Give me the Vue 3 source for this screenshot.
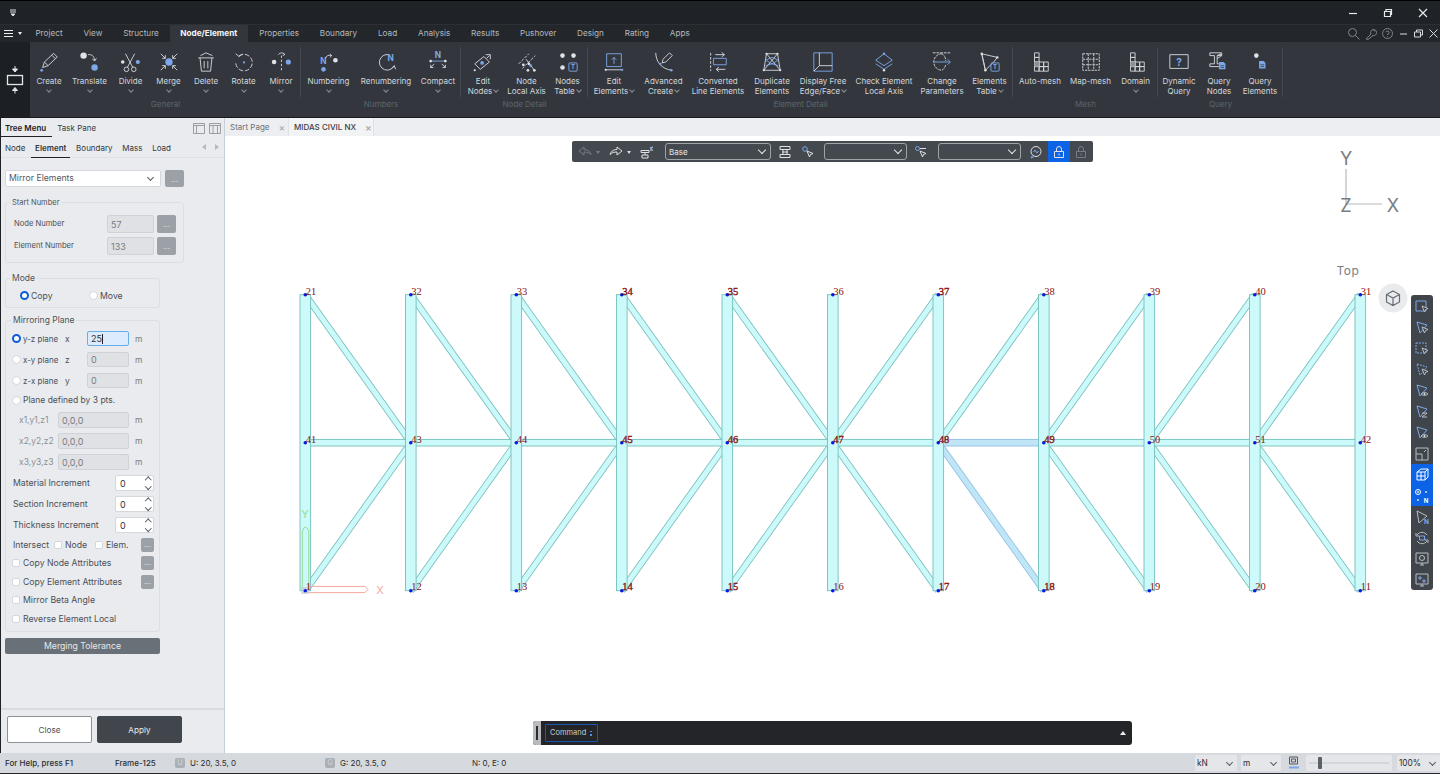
<template>
  <div class="app">
    <div class="titlebar">
      <svg class="qat" width="8" height="8" viewBox="0 0 8 8"><path d="M1 1h6M1 3h6M2 5h4L4 7z" stroke="#d8dbdf" fill="#d8dbdf" stroke-width="1" /></svg>
      <div class="win-btns">
        <svg width="12" height="12" viewBox="0 0 12 12"><path d="M2 6.5h8" /></svg>
        <svg width="12" height="12" viewBox="0 0 12 12"><path d="M2.5 4.5h6v5h-6zM4 4.5V2.5h5.5v5H8.5" /></svg>
        <svg width="12" height="12" viewBox="0 0 12 12"><path d="M2 2l8 8M10 2l-8 8" /></svg>
      </div>
    </div>

    <div class="tabbar">
      <div class="hamburger"><span></span><span></span><span></span><i></i></div>
      <span v-for="t in menuTabs" :key="t" class="menu-tab" :class="{ on: t === 'Node/Element' }">{{ t }}</span>
      <div class="tab-tools">
        <svg width="13" height="13" viewBox="0 0 13 13"><circle cx="5.5" cy="5.5" r="4" /><path d="M8.5 8.5l4 4" /></svg>
        <svg width="13" height="13" viewBox="0 0 13 13"><path d="M2 12l5-5a3 3 0 1 1 2 1.5L4 12.5zM9 2.5l2 2" /></svg>
        <svg width="13" height="13" viewBox="0 0 13 13"><circle cx="6.5" cy="6.5" r="5" /><path d="M5 5.2a1.6 1.6 0 1 1 1.5 2v.8M6.5 9.4v.6" /></svg>
        <svg width="11" height="13" viewBox="0 0 11 13"><path d="M2 7h7" /></svg>
        <svg width="11" height="13" viewBox="0 0 11 13"><path d="M1.5 5h6v5h-6zM3.5 5V3h6v5H7.5" /></svg>
        <svg width="11" height="13" viewBox="0 0 11 13"><path d="M1.5 2.5l8 8M9.5 2.5l-8 8" /></svg>
      </div>
    </div>

    <div class="ribbon">
      <div class="view-block">
        <svg width="20" height="28" viewBox="0 0 20 28">
          <path d="M10 0v3M7.5 3h5L10 6z" fill="#e4e7ea" stroke="#e4e7ea" />
          <rect x="2.5" y="9.5" width="15" height="9" fill="none" stroke="#e4e7ea" stroke-width="1.3" />
          <path d="M10 27.5v-3M7.5 24.5h5L10 21.5z" fill="#e4e7ea" stroke="#e4e7ea" />
        </svg>
      </div>
      <div v-for="g in groups" :key="g.name" class="rb-group">
        <div class="rb-items">
          <div v-for="it in g.items" :key="it.lines.join()" class="rb-item" :style="{ width: it.w + 'px' }">
            <svg class="rb-ico" width="22" height="22" viewBox="0 0 24 24" v-html="icons[it.icon]"></svg>
            <div v-for="(l, n) in it.lines" :key="l" class="rb-line">
              {{ l }}<i v-if="it.inline && n === 1" class="chev small inl"></i>
            </div>
            <i v-if="it.below" class="chev small below"></i>
          </div>
        </div>
        <div class="rb-name">{{ g.name }}</div>
      </div>
    </div>

    <div class="workspace">
      <aside class="panel">
        <div class="pane-tabs">
          <span class="pane-tab on">Tree Menu</span>
          <span class="pane-tab">Task Pane</span>
          <div class="pane-icons">
            <svg width="12" height="12" viewBox="0 0 12 12"><path d="M.5 1.5h11v10H.5zM.5 3.5h11M3.5 3.5v8" /></svg>
            <svg width="12" height="12" viewBox="0 0 12 12"><path d="M.5 1.5h11v10H.5zM.5 3.5h11M8.5 3.5v8M4 3.5v8" /></svg>
          </div>
        </div>
        <div class="sub-tabs">
          <span v-for="t in subTabs" :key="t" class="sub-tab" :class="{ on: t === 'Element' }">{{ t }}</span>
          <div class="sub-arrows"><i></i><i class="next"></i></div>
        </div>

        <div class="panel-body">
          <div class="func-row">
            <div class="func-select">Mirror Elements<i class="chev"></i></div>
            <div class="dots big">...</div>
          </div>

          <fieldset class="box start-box">
            <legend>Start Number</legend>
            <div class="num-row">
              <span class="num-label">Node Number</span>
              <div class="inp off num-inp">57</div>
              <div class="dots big">...</div>
            </div>
            <div class="num-row">
              <span class="num-label">Element Number</span>
              <div class="inp off num-inp">133</div>
              <div class="dots big">...</div>
            </div>
          </fieldset>

          <fieldset class="box mode-box">
            <legend>Mode</legend>
            <div class="mode-row">
              <span class="mode-opt"><i class="radio on"></i>Copy</span>
              <span class="mode-opt"><i class="radio"></i>Move</span>
            </div>
          </fieldset>

          <fieldset class="box plane-box">
            <legend>Mirroring Plane</legend>
            <div v-for="p in planes" :key="p.name" class="row">
              <i class="radio" :class="{ on: p.on }"></i>
              <span class="plane-name">{{ p.name }}</span>
              <span class="plane-axis">{{ p.axis }}</span>
              <div class="inp plane-inp" :class="p.on ? 'focus' : 'off'">{{ p.val }}<b v-if="p.on" class="caret"></b></div>
              <span class="unit">m</span>
            </div>
            <div class="row short">
              <i class="radio"></i><span class="plane-def">Plane defined by 3 pts.</span>
            </div>
            <div v-for="c in coords" :key="c" class="row">
              <span class="coord-name">{{ c }}</span>
              <div class="inp off coord-inp">0,0,0</div>
              <span class="unit">m</span>
            </div>
            <div v-for="s in increments" :key="s" class="row">
              <span class="inc-name">{{ s }}</span>
              <div class="spin">0<span class="spin-arrows"><i class="chev up"></i><i class="chev"></i></span></div>
            </div>
            <div class="row check">
              <span class="isect">Intersect</span>
              <i class="box-check"></i><span class="isect-node">Node</span>
              <i class="box-check"></i><span>Elem.</span>
              <div class="dots">...</div>
            </div>
            <div class="row check"><i class="box-check"></i><span>Copy Node Attributes</span><div class="dots">...</div></div>
            <div class="row check"><i class="box-check"></i><span>Copy Element Attributes</span><div class="dots">...</div></div>
            <div class="row check"><i class="box-check"></i><span>Mirror Beta Angle</span></div>
            <div class="row check"><i class="box-check"></i><span>Reverse Element Local</span></div>
          </fieldset>

          <div class="merge-btn">Merging Tolerance</div>
        </div>

        <div class="panel-foot">
          <button class="foot-btn">Close</button>
          <button class="foot-btn dark">Apply</button>
        </div>
      </aside>

      <main class="main">
        <div class="doc-tabs">
          <span class="doc-tab">Start Page<em>×</em></span>
          <span class="doc-tab on">MIDAS CIVIL NX<em>×</em></span>
        </div>
        <div class="canvas">
          <svg class="model" viewBox="225 136 1215 617" width="1215" height="617">
            <!-- diagonals go under the columns -->
            <g v-for="(d, i) in diagonals" :key="'d' + i">
              <line :x1="d.x1" :y1="d.y1" :x2="d.x2" :y2="d.y2" :stroke="d.sel ? '#8dbfe2' : '#74bfbb'" stroke-width="6.8" />
              <line :x1="d.x1" :y1="d.y1" :x2="d.x2" :y2="d.y2" :stroke="d.sel ? '#bfe5f6' : '#ccf9f9'" stroke-width="5.2" />
            </g>
            <g v-for="(x, i) in columns.slice(0, 10)" :key="'h' + i">
              <rect :x="x" y="439.4" width="105.5" height="6.6" :fill="i === 6 ? '#bfe5f6' : '#ccf9f9'" :stroke="i === 6 ? '#8dbfe2' : '#74bfbb'" stroke-width="0.9" />
            </g>
            <rect v-for="x in columns" :key="'c' + x" :x="x - 5.3" :y="topY" width="10.6" :height="botY - topY" fill="#ccf9f9" stroke="#74bfbb" stroke-width="0.9" />

            <!-- global axes at the origin -->
            <path d="M302.3 590V531q3-8 6.5 0v59" fill="none" stroke="#97dc97" />
            <path d="M308 586.4h57l3 3-3 3.2h-57" fill="none" stroke="#f6a8a2" />
            <rect x="301" y="587" width="8" height="7" rx="1.5" fill="#c9d0d4" opacity="0.8" />
            <text x="305" y="518" class="axis-lab" fill="#97dc97" text-anchor="middle">Y</text>
            <text x="380" y="594" class="axis-lab" fill="#f6a8a2" text-anchor="middle">X</text>

            <g v-for="n in nodes" :key="n.t + n.x">
              <circle :cx="n.x" :cy="n.y" r="1.8" fill="#0a18e8" />
              <text :x="n.x + 0.5" :y="n.by" class="node-lab" :class="{ dup: n.dup }">{{ n.t }}</text>
            </g>

            <!-- view triad -->
            <path d="M1346 169v36M1346 204h36" stroke="#b4b9be" stroke-width="1.2" fill="none" />
            <text x="1346" y="165" class="triad" text-anchor="middle">Y</text>
            <text x="1346" y="212" class="triad" text-anchor="middle">Z</text>
            <text x="1393" y="212" class="triad" text-anchor="middle">X</text>
            <text x="1348" y="275" class="view-name" text-anchor="middle">Top</text>
            <circle cx="1393" cy="298" r="14.5" fill="#e9ebed" />
            <path d="M1393 291l6.5 3.5v7.5l-6.5 3.5-6.5-3.5v-7.5zM1386.5 294.5l6.5 3.5 6.5-3.5M1393 298v7.5" fill="none" stroke="#666c73" stroke-width="1.2" />
          </svg>

          <div class="float-bar">
            <svg class="fb-ico dim first" width="14" height="14" viewBox="0 0 14 14"><path d="M1 6l5-4v2.5c4 0 6 2 7 5-2-2-4-2.5-7-2.5V10z" /></svg>
            <i class="tri dim"></i>
            <svg class="fb-ico" width="14" height="14" viewBox="0 0 14 14"><path d="M13 6L8 2v2.5c-4 0-6 2-7 5 2-2 4-2.5 7-2.5V10z" /></svg>
            <i class="tri"></i>
            <svg class="fb-ico" width="14" height="14" viewBox="0 0 14 14"><path d="M1 5.5h8v2H1zM2 10h6v3H2zM5 7.5V10M10 3l3-1M10 5h3" /><circle cx="11" cy="3" r="1.2" fill="#7da7e8" stroke="none" /></svg>
            <div class="fb-select base">Base<i class="chev light"></i></div>
            <svg class="fb-ico" width="14" height="14" viewBox="0 0 14 14"><path d="M2 1.5h10v3H2zM2 9.5h10v3H2zM5 4.5v5M9 4.5v5M4 7h6" /></svg>
            <svg class="fb-ico pick" width="14" height="14" viewBox="0 0 14 14"><circle cx="4" cy="4" r="2.3" stroke="#7da7e8" /><path d="M6 6l6 2.5-2.5 1-1 2.5z" /></svg>
            <div class="fb-select mid">&nbsp;<i class="chev light"></i></div>
            <svg class="fb-ico" width="14" height="14" viewBox="0 0 14 14"><circle cx="3.5" cy="3.5" r="2" stroke="#7da7e8" /><path d="M6 3.5h6M6 6l6 2.5-2.5 1-1 2.5z" /></svg>
            <div class="fb-select last">&nbsp;<i class="chev light"></i></div>
            <svg class="fb-ico" width="14" height="14" viewBox="0 0 14 14"><circle cx="7" cy="6.5" r="5" /><path d="M3.5 10.5L2 13l3-1.3M4.5 7l1.5-2 2 3 1.5-2" stroke="#7da7e8" /></svg>
            <div class="lock-on">
              <svg class="fb-ico" width="14" height="14" viewBox="0 0 14 14"><path d="M2.5 6.5h9v6h-9zM4.5 6.5V4a2.5 2.5 0 0 1 5 0v2.5M7 8.5v2" /></svg>
            </div>
            <svg class="fb-ico dim" width="14" height="14" viewBox="0 0 14 14"><path d="M2.5 6.5h9v6h-9zM4.5 6.5V4a2.5 2.5 0 0 1 5 0v2.5M7 8.5v2" /></svg>
          </div>

          <div class="side-bar">
            <div v-for="(b, i) in sideIcons" :key="i" class="side-btn" :class="{ on: b.on }">
              <svg width="16" height="16" viewBox="0 0 16 16" v-html="b.svg"></svg>
            </div>
          </div>

          <div class="cmd-bar">
            <div class="cmd-grip"><i></i></div>
            <div class="cmd-box">Command<span class="cmd-dots"><i></i><i></i></span></div>
            <i class="cmd-tri"></i>
          </div>
        </div>
      </main>
    </div>

    <footer class="status">
      <span class="st-help">For Help, press F1</span>
      <span class="st-frame">Frame-125</span>
      <i class="st-badge">U</i>
      <span class="st-u">U: 20, 3.5, 0</span>
      <i class="st-badge">G</i>
      <span class="st-g">G: 20, 3.5, 0</span>
      <span class="st-ne">N: 0, E: 0</span>
      <div class="st-select unit-f">kN<i class="chev"></i></div>
      <div class="st-select unit-l">m<i class="chev"></i></div>
      <svg class="st-ico" width="12" height="16" viewBox="0 0 12 16"><path d="M1.5 2h8v7h-8zM3.5 4h4v3h-4z" fill="none" stroke="#555b62" /><path d="M1 12.5h10" stroke="#7da7e8" stroke-width="2" /></svg>
      <div class="st-slider"><i class="track"></i><i class="thumb"></i></div>
      <div class="st-select zoom">100%<i class="chev"></i></div>
    </footer>
  </div>
</template>

<script setup>
const BLUE = '#7da7e8'
const dot = (x, y, r = 2.5, c = BLUE) => `<circle cx="${x}" cy="${y}" r="${r}" fill="${c}" stroke="none"/>`
const wdot = (x, y, r = 2.5) => dot(x, y, r, '#dfe2e6')
const blue = (d, extra = '') => `<path d="${d}" stroke="${BLUE}" ${extra}/>`
const path = (d, extra = '') => `<path d="${d}" ${extra}/>`
const letter = (t, x, y, s = 9) => `<text x="${x}" y="${y}" font-size="${s}" font-weight="700" font-family="Inter, sans-serif" fill="${BLUE}" stroke="none" text-anchor="middle">${t}</text>`
const tBox = (x, y) => `<rect x="${x}" y="${y}" width="9" height="9" rx="1" stroke="${BLUE}"/>` + letter('T', x + 4.5, y + 7, 6.5)
const docBadge = (x, y) => `<path d="M${x} ${y}h5l2 2v6h-7z" fill="${BLUE}" stroke="none"/><path d="M${x + 1.5} ${y + 4}h4M${x + 1.5} ${y + 6}h4" stroke="#33373d" stroke-width=".8"/>`

const gridL = (
  path('M6 2h5v5h-5zM6 7h5v5h-5zM6 12h5v5h-5zM6 17h5v5h-5zM11 12h5v5h-5zM16 12h5v5h-5zM11 17h5v5h-5zM16 17h5v5h-5z') +
  path('M6 12h5v5h-5z', 'fill="#8b9096" stroke="none"')
)

const icons = {
  create: path('M5 18L7 12 17 2.5l4 4L11 16zM15 4.5l4 4M7 12l4 4') + dot(4, 21, 1.5),
  translate: wdot(5, 5, 3.5) + dot(17, 18, 3.5) + path('M10 4c4-.5 6.5 1.5 7 6M14.5 8.5l2.5 2.5 2-3'),
  divide: `<circle cx="7" cy="20" r="2.5"/><circle cx="15" cy="20" r="2.5"/>` + path('M8 18L16 3M14 18L6 3') + wdot(3, 12, 2) + dot(19.5, 12, 2.3),
  merge: dot(12, 12, 4) + path('M3 3l5 5M8 4.5V8H4.5M21 3l-5 5M16 4.5V8h3.5M3 21l5-5M8 19.5V16H4.5M21 21l-5-5M16 19.5V16h3.5'),
  delete: path('M3.5 7.5h17M5.5 7.5L7 22h10l1.5-14.5M10 11v8M14 11v8M6 5l6-3 7 3'),
  rotate: path('M6.5 5.5a9 9 0 1 1-3.5 7', 'stroke-dasharray="5 2"') + path('M3 3l3.5 3L10 3.5') + dot(12, 12.5, 1.2),
  mirror: wdot(4.5, 12, 2.5) + dot(20, 12, 2.8) + path('M12.5 5v17', 'stroke-dasharray="2.5 2"') + path('M9 4c2-2.5 5-2.5 7 0M14.5 2l1.5 2-2 1'),
  numbering: letter('N', 6, 14) + dot(6, 20, 2.5) + wdot(19, 10, 2.5) + path('M8 8c1-3 4-4 7-3M13 3l2 2-2 2'),
  renumbering: path('M15 4a8.5 8.5 0 1 0 6 12M18 19l3-3 1.5 4') + letter('N', 17, 11),
  compact: letter('N', 12, 8) + blue('M5 11h14') + wdot(4, 11, 1.5) + wdot(20, 11, 1.5) + path('M8 14l-4 4M4 15v3h3M16 14l4 4M20 15v3h-3'),
  editNodes: path('M3 14L13 6l6 6-10 8zM19 5l-3 3M15 4h5v5') + dot(11, 13, 2) + wdot(3, 21, 1.2),
  nodeLocal: path('M3 14L14 3M7 19L21 5', 'stroke-dasharray="3 1.5"') + path('M11 9l9 12') + wdot(8, 15, 1.5) + wdot(14, 14, 1.5) + dot(16, 16, 1.5) + wdot(20, 21, 1.5) + wdot(13, 21, 1.5),
  nodesTable: wdot(6, 5, 2.5) + wdot(18, 5, 2.5) + wdot(6, 18, 2.5) + tBox(13, 13),
  editElements: blue('M4 3h16v14H4zM12 14V7M9.5 9.5L12 7l2.5 2.5') + path('M3 20.5h18') + wdot(3, 20.5, 1.2) + dot(21, 20.5, 1.2),
  advanced: path('M3 2c0 9 6 18 18 19') + dot(8, 14, 1.3) + dot(20, 21, 1.3) + path('M10 13l1-4 7-7 3 3-7 7z'),
  converted: path('M4 2v20', 'stroke-dasharray="3 1.5"') + blue('M7 8h14v7H7z') + path('M9 4h10M16 1.5L19 4l-3 2.5M20 20H10M13 17.5L10 20l3 2.5'),
  duplicate: path('M6 3L3 21h18L18 3zM6 3l15 18M18 3L3 21') + blue('M5 10l7-3 7 3-7 4zM5 16l7-2 7 2') + wdot(6, 3, 1.2) + wdot(18, 3, 1.2) + wdot(3, 21, 1.2) + wdot(21, 21, 1.2),
  freeEdge: blue('M2 2h20v20H2z') + path('M8 2v14h14M8 16l-6 6'),
  check: blue('M12 3l9 7-9 6-9-6zM3 14l9 6 9-6') + dot(12, 3, 1.3) + wdot(12, 21, 1.3),
  change: path('M12 3a9 9 0 0 0 0 18M12 3a9 9 0 0 1 4 8M12 21a9 9 0 0 0 4-6M2 2h20', 'stroke-dasharray="3 1"') + blue('M3 12h18M18 9l3 3-3 3'),
  elementsTable: path('M3 3l17 4-4 5-9 9zM3 3l4 18') + wdot(3, 3, 1.3) + wdot(20, 7, 1.3) + wdot(7, 21, 1.3) + tBox(13, 13),
  autoMesh: gridL,
  mapMesh: path('M3 3h18v18H3zM3 9h18M3 15h18M9 3v18M15 3v18', 'stroke-dasharray="2.5 1"'),
  domain: gridL,
  dynamic: path('M2 4h20v15H2z') + letter('?', 12, 16, 11),
  queryNodes: path('M2 2h13v3H10v9h5v3H2v-3h5V5H2z') + path('M10 5l4-2v3l-4 2') + docBadge(12, 12),
  queryElems: wdot(8, 5, 2.5) + docBadge(11, 11)
}

const item = (label, w, icon, caret) => ({
  lines: label.split('|'),
  w,
  icon,
  below: caret && !label.includes('|'),
  inline: caret && label.includes('|')
})

const groups = [
  { name: 'General', items: [
    item('Create', 38, 'create', true), item('Translate', 43, 'translate', true), item('Divide', 39, 'divide', true),
    item('Merge', 37, 'merge', true), item('Delete', 38, 'delete', true), item('Rotate', 37, 'rotate', true), item('Mirror', 38, 'mirror', true)
  ] },
  { name: 'Numbers', items: [
    item('Numbering', 55, 'numbering', true), item('Renumbering', 60, 'renumbering', true), item('Compact', 44, 'compact', true)
  ] },
  { name: 'Node Detail', items: [
    item('Edit|Nodes', 44, 'editNodes', true), item('Node|Local Axis', 43, 'nodeLocal'), item('Nodes|Table', 39, 'nodesTable', true)
  ] },
  { name: 'Element Detail', items: [
    item('Edit|Elements', 52, 'editElements', true), item('Advanced|Create', 47, 'advanced', true), item('Converted|Line Elements', 62, 'converted'),
    item('Duplicate|Elements', 46, 'duplicate'), item('Display Free|Edge/Face', 56, 'freeEdge', true), item('Check Element|Local Axis', 66, 'check'),
    item('Change|Parameters', 50, 'change'), item('Elements|Table', 45, 'elementsTable', true)
  ] },
  { name: 'Mesh', items: [
    item('Auto-mesh', 54, 'autoMesh'), item('Map-mesh', 47, 'mapMesh'), item('Domain', 43, 'domain', true)
  ] },
  { name: 'Query', items: [
    item('Dynamic|Query', 42, 'dynamic'), item('Query|Nodes', 38, 'queryNodes'), item('Query|Elements', 44, 'queryElems')
  ] }
]

const menuTabs = ['Project', 'View', 'Structure', 'Node/Element', 'Properties', 'Boundary', 'Load', 'Analysis', 'Results', 'Pushover', 'Design', 'Rating', 'Apps']
const subTabs = ['Node', 'Element', 'Boundary', 'Mass', 'Load']

const planes = [
  { name: 'y-z plane', axis: 'x', val: '25', on: true },
  { name: 'x-y plane', axis: 'z', val: '0' },
  { name: 'z-x plane', axis: 'y', val: '0' }
]
const coords = ['x1,y1,z1', 'x2,y2,z2', 'x3,y3,z3']
const increments = ['Material Increment', 'Section Increment', 'Thickness Increment']

// truss geometry, in page coordinates
const topY = 294.7
const midY = 442.7
const botY = 590.7
const columns = Array.from({ length: 11 }, (_, i) => 305.3 + 105.5 * i)

const diagonals = []
columns.slice(0, 10).forEach((x, i) => {
  const nx = columns[i + 1]
  if (i < 5) {
    diagonals.push({ x1: x, y1: topY, x2: nx, y2: midY }, { x1: x, y1: botY, x2: nx, y2: midY })
  } else {
    diagonals.push({ x1: x, y1: midY, x2: nx, y2: topY }, { x1: x, y1: midY, x2: nx, y2: botY, sel: i === 6 })
  }
})

const topLabels = ['21', '32', '33', '34', '35', '36', '37', '38', '39', '40', '31']
const midLabels = ['41', '43', '44', '45', '46', '47', '48', '49', '50', '51', '42']
const botLabels = ['1', '12', '13', '14', '15', '16', '17', '18', '19', '20', '11']
const nodes = columns.flatMap((x, i) => [
  { t: topLabels[i], x, y: topY, by: 295, dup: [3, 4, 6].includes(i) },
  { t: midLabels[i], x, y: midY, by: 443, dup: [3, 4, 5, 6, 7].includes(i) },
  { t: botLabels[i], x, y: botY, by: 590, dup: [3, 4, 6, 7].includes(i) }
])

const cursor = path('M8 7l6 2.5-2.5 1L10.5 13z', 'fill="#3f454c"')
const tri = blue('M3 2L13 5 6 13z')
const triDash = blue('M3 2L13 5 6 13z', 'stroke-dasharray="2 1"')
const eye = path('M7 11c2-2 5-2 7 0-2 2-5 2-7 0z') + wdot(10.5, 11, 1)
const sideIcons = [
  { svg: blue('M2 2h10v10H2z') + cursor },
  { svg: tri + cursor },
  { svg: blue('M2 2h10v10H2z', 'stroke-dasharray="2 1"') + cursor },
  { svg: triDash + cursor },
  { svg: tri + eye },
  { svg: tri + path('M8 9h5l-5 4h5') },
  { svg: tri + eye },
  { svg: path('M2 2h12v12H2zM2 8h6v6M10 6l2-2') },
  { on: true, svg: path('M3 5l4-3h7v8l-3 3H3zM3 5h8v8M11 5l3-3M3 9h8M7 5v8') },
  { on: true, svg: '<circle cx="4" cy="4" r="2.5"/>' + wdot(4, 4, 1) + wdot(12, 4, 1) + wdot(4, 12, 1) + `<text x="12" y="14.5" font-size="6" font-weight="700" font-family="Inter, sans-serif" fill="#fff" stroke="none" text-anchor="middle">N</text>` },
  { svg: path('M3 2l10 5-8 7z') + letter('N', 12.5, 15, 6.5) },
  { svg: path('M3 5a6 6 0 0 1 10 0M13 11a6 6 0 0 1-10 0M2 3v3h3M14 13v-3h-3') + blue('M5.5 6h5v4h-5z') },
  { svg: path('M2 2h12v10H2zM6 14h4M8 12v2') + '<circle cx="8" cy="7" r="2.5"/>' },
  { svg: path('M2 2h12v10H2zM6 14h4M8 12v2') + blue('M5 5h2v2H5zM9 8h2v2H9z') }
]
</script>

<style>
html,
body {
  margin: 0;
  background: #fff;
}
</style>

<style scoped>
.app {
  width: 1440px;
  height: 774px;
  display: flex;
  flex-direction: column;
  overflow: hidden;
  font-family: Inter, "Noto Sans", sans-serif;
  font-size: 8px;
  color: #4b5057;
}

/* top window chrome */
.titlebar {
  height: 24px;
  box-sizing: border-box;
  border-top: 1px solid #000;
  background: #1f2327;
  display: flex;
  align-items: center;
  padding-left: 9px;
}
.win-btns {
  margin-left: auto;
  display: flex;
  gap: 23px;
  padding-right: 11px;
}
.win-btns svg path {
  fill: none;
  stroke: #e6e8ea;
  stroke-width: 1.2;
}
.tabbar {
  height: 18px;
  background: #23272b;
  border-top: 1px solid #2c3034;
  box-sizing: border-box;
  display: flex;
  align-items: stretch;
  color: #b4b9be;
}
.hamburger {
  width: 25px;
  flex: none;
  position: relative;
  display: flex;
  flex-direction: column;
  justify-content: center;
  gap: 1.5px;
  padding-left: 4px;
  box-sizing: border-box;
}
.hamburger span {
  display: block;
  width: 9px;
  height: 1.5px;
  background: #eceef0;
}
.hamburger i {
  position: absolute;
  left: 18px;
  top: 7px;
  border: 2.5px solid transparent;
  border-top: 3px solid #eceef0;
}
.menu-tab {
  padding: 0 10.4px;
  line-height: 17px;
  font-size: 8.2px;
}
.menu-tab.on {
  background: #33373d;
  color: #f4f5f6;
  font-weight: 700;
  padding: 0 10.5px;
  margin-left: 0.5px;
  margin-right: 1px;
}
.tab-tools {
  margin-left: auto;
  display: flex;
  align-items: center;
  gap: 4px;
  padding-right: 1px;
}
.tab-tools svg {
  fill: none;
  stroke: #7f858b;
}
.tab-tools svg:nth-child(n + 4) {
  stroke: #d8dbdf;
}

/* ribbon */
.ribbon {
  height: 76px;
  box-sizing: border-box;
  background: #33373d;
  border-bottom: 1px solid #17191c;
  display: flex;
  color: #d3d6da;
}
.view-block {
  width: 30px;
  background: #1c2024;
  display: flex;
  align-items: center;
  justify-content: center;
}
.rb-items {
  display: flex;
  height: 50px;
  margin-top: 5px;
  border-right: 1px solid #44494f;
}
.rb-item {
  box-sizing: border-box;
  display: flex;
  flex-direction: column;
  align-items: center;
  position: relative;
  white-space: nowrap;
  padding-top: 4px;
}
.rb-ico {
  flex: none;
  fill: none;
  stroke: #d5d9de;
  stroke-width: 1;
  margin-bottom: 3px;
}
.rb-line {
  line-height: 10px;
  font-size: 8px;
}
.rb-name {
  text-align: center;
  line-height: 10px;
  margin-top: 2px;
  font-size: 8px;
  color: #5e646b;
}
.chev {
  display: inline-block;
  width: 5px;
  height: 5px;
  border-right: 1.2px solid #555b62;
  border-bottom: 1.2px solid #555b62;
  transform: rotate(45deg);
  box-sizing: border-box;
}
.chev.up {
  transform: rotate(225deg);
}
.chev.small {
  width: 4px;
  height: 4px;
  border-width: 0.8px;
  border-color: #8a9097;
}
.chev.below {
  position: absolute;
  top: 41px;
}
.chev.inl {
  margin-left: 2px;
  vertical-align: 2px;
}
.chev.light {
  border-color: #e3e5e8;
  width: 6px;
  height: 6px;
}

/* workspace */
.workspace {
  flex: 1;
  display: flex;
  min-height: 0;
}
.panel {
  width: 225px;
  flex: none;
  box-sizing: border-box;
  background: #e9ebee;
  border-left: 1px solid #1f2327;
  border-right: 1px solid #c6ced8;
  display: flex;
  flex-direction: column;
}
.pane-tabs {
  height: 19px;
  display: flex;
  align-items: center;
}
.pane-tab {
  height: 19px;
  line-height: 20px;
  padding: 0 4px;
  margin-right: 1px;
  color: #383c42;
  box-sizing: border-box;
  font-size: 8px;
}
.pane-tab.on {
  font-weight: 600;
  color: #1f2226;
  border-bottom: 1px solid #1f2226;
  padding-right: 6px;
}
.pane-icons {
  margin-left: auto;
  display: flex;
  gap: 4px;
  padding-right: 3px;
}
.pane-icons svg {
  fill: none;
  stroke: #9a9fa5;
}
.sub-tabs {
  height: 21px;
  box-sizing: border-box;
  border-bottom: 1px solid #dfe1e4;
  display: flex;
  align-items: stretch;
  color: #33373c;
}
.sub-tab {
  padding: 0 4px;
  margin-right: 1.7px;
  line-height: 22px;
  font-size: 8px;
}
.sub-tab.on {
  font-weight: 600;
  border-bottom: 1px solid #1f2226;
  margin-bottom: -1px;
}
.sub-arrows {
  margin-left: auto;
  display: flex;
  align-items: center;
  gap: 9px;
  padding-right: 5px;
}
.sub-arrows i {
  border: 3px solid transparent;
  border-right: 4px solid #b6babf;
  border-left: 0;
}
.sub-arrows i.next {
  border-right: 0;
  border-left: 4px solid #b6babf;
}
.panel-body {
  flex: 1;
  padding: 12px 0 0 4px;
}
.func-row {
  display: flex;
  gap: 4px;
  height: 17px;
}
.func-select {
  width: 156px;
  box-sizing: border-box;
  background: #fff;
  border: 1px solid #d4d7db;
  border-radius: 2px;
  padding: 0 3px;
  line-height: 15px;
  font-size: 8.7px;
  display: flex;
  align-items: center;
  justify-content: space-between;
  color: #555a60;
}
.func-select .chev {
  margin-right: 4px;
  margin-top: -2px;
}
.dots {
  width: 13px;
  height: 14px;
  margin-left: auto;
  margin-right: 5px;
  background: #9ca1a8;
  border-radius: 2px;
  color: #e4e6e8;
  text-align: center;
  line-height: 12px;
  font-size: 8px;
  flex: none;
}
.dots.big {
  width: 19px;
  height: 18px;
  margin: 0;
  line-height: 18px;
}
.func-row .dots.big {
  height: 17px;
}
.box {
  margin: 0;
  padding: 0;
  min-width: 0;
  box-sizing: border-box;
  border: 1px solid #dcdee2;
  border-radius: 3px;
}
.box legend {
  margin-left: 4px;
  padding: 0 2px;
  line-height: 11px;
  font-size: 8.5px;
  color: #4f5359;
}
.start-box {
  width: 179px;
  height: 66px;
  margin-top: 10px;
  padding: 7px 7px 0 0;
}
.start-box legend {
  font-size: 7.5px;
}
.num-row {
  display: flex;
  align-items: center;
  height: 18px;
  margin-bottom: 4px;
}
.num-label {
  width: 101px;
  padding: 0 0 2px 8px;
  box-sizing: border-box;
  font-size: 7.6px;
}
.num-inp {
  width: 47px;
  height: 18px;
  margin-right: 3px;
}
.inp {
  box-sizing: border-box;
  border-radius: 2px;
  padding-left: 3px;
  display: flex;
  align-items: center;
  font-size: 9px;
}
.inp.off {
  background: #dfe1e4;
  border: 1px solid #cfd2d6;
  color: #777c82;
}
.inp.focus {
  background: #dcebfd;
  border: 1px solid #66b0ea;
  color: #30343a;
}
.caret {
  width: 1px;
  height: 10px;
  background: #222;
}
.mode-box {
  width: 155px;
  height: 35px;
  margin-top: 10px;
}
.mode-row {
  display: flex;
  align-items: center;
  height: 23px;
  padding-left: 14px;
  font-size: 8.7px;
}
.mode-opt {
  width: 69px;
  display: flex;
  align-items: center;
  gap: 2px;
}
.radio {
  flex: none;
  width: 9px;
  height: 9px;
  box-sizing: border-box;
  border-radius: 50%;
  background: #fff;
  border: 1px solid #d3d6da;
}
.radio.on {
  border: 2.5px solid #0b5ed7;
}
.plane-box {
  width: 155px;
  height: 317px;
  margin-top: 7px;
  padding: 2px 0 0 6px;
}
.plane-box legend {
  margin-left: -1px;
}
.row {
  display: flex;
  align-items: center;
  height: 21px;
  white-space: nowrap;
}
.row.short {
  height: 18.5px;
}
.row.check {
  height: 18.5px;
  font-size: 8.7px;
}
.row > .radio {
  margin-right: 2px;
}
.row > .box-check {
  margin-right: 3px;
}
.plane-name {
  width: 42px;
  font-size: 8px;
}
.plane-axis {
  width: 22px;
  font-size: 8.5px;
}
.plane-def {
  font-size: 8.5px;
}
.plane-inp {
  width: 42px;
  height: 15px;
}
.unit {
  margin-left: 6px;
  color: #777c82;
  font-size: 8.5px;
}
.coord-name {
  width: 39px;
  margin-left: 7px;
  color: #8b9096;
  font-size: 8.5px;
}
.coord-inp {
  width: 71px;
  height: 16px;
}
.inc-name {
  width: 102px;
  padding-left: 1px;
  font-size: 8.7px;
}
.spin {
  width: 39px;
  height: 16px;
  box-sizing: border-box;
  background: #fff;
  border: 1px solid #d4d7db;
  border-radius: 2px;
  padding-left: 4px;
  display: flex;
  align-items: center;
  justify-content: space-between;
  color: #333;
  font-size: 9px;
}
.spin-arrows {
  display: flex;
  flex-direction: column;
  align-items: center;
  margin-right: 3px;
  gap: 1px;
}
.spin-arrows .chev {
  width: 4.5px;
  height: 4.5px;
}
.box-check {
  flex: none;
  width: 8px;
  height: 8px;
  background: #fff;
  border: 1px solid #d4d7db;
  border-radius: 2px;
  box-sizing: border-box;
}
.isect {
  width: 42px;
  padding-left: 1px;
  box-sizing: border-box;
}
.isect-node {
  width: 30px;
}
.merge-btn {
  width: 155px;
  height: 16px;
  margin-top: 6px;
  background: #6a7077;
  border-radius: 2px;
  color: #e6e8ea;
  text-align: center;
  line-height: 16px;
  font-size: 8.7px;
}
.panel-foot {
  height: 45px;
  box-sizing: border-box;
  border-top: 2px solid #d9dbde;
  padding: 6px 0 0 6px;
  display: flex;
  gap: 5px;
}
.foot-btn {
  width: 85px;
  height: 27px;
  box-sizing: border-box;
  font-family: inherit;
  font-size: 8.2px;
  background: #fff;
  color: #4b5057;
  border: 1px solid #8d9298;
  border-radius: 2px;
  padding: 0;
}
.foot-btn.dark {
  background: #41464c;
  border-color: #41464c;
  color: #e9ebed;
}

/* document area */
.main {
  flex: 1;
  display: flex;
  flex-direction: column;
  min-width: 0;
}
.doc-tabs {
  height: 18px;
  background: #eceef1;
  display: flex;
  flex: none;
}
.doc-tab {
  padding: 0 5px;
  line-height: 18px;
  color: #6b7076;
  font-size: 8px;
  display: flex;
  gap: 9px;
  width: 63px;
  box-sizing: border-box;
  white-space: nowrap;
}
.doc-tab em {
  font-style: normal;
  color: #9ea3a9;
  font-size: 10px;
}
.doc-tab.on {
  width: 86px;
  background: #f2f3f5;
  color: #3d4147;
  font-weight: 500;
  border-left: 1px solid #dfe1e4;
  border-right: 1px solid #dfe1e4;
}
.canvas {
  flex: 1;
  position: relative;
  background: #fff;
}
.model {
  position: absolute;
  inset: 0;
}
.node-lab {
  font-family: "Liberation Serif", serif;
  font-size: 10.5px;
  fill: #8a1010;
}
.node-lab.dup {
  stroke: #8a1010;
  stroke-width: 0.35;
}
.axis-lab {
  font-family: Inter, sans-serif;
  font-size: 11px;
}
.triad {
  font-family: Inter, sans-serif;
  font-size: 18px;
  fill: #777c83;
}
.view-name {
  font-family: Inter, sans-serif;
  font-size: 12px;
  letter-spacing: 0.5px;
  fill: #777c83;
}
.float-bar {
  position: absolute;
  left: 347px;
  top: 5px;
  width: 521px;
  height: 21px;
  background: #44494f;
  border-radius: 2px;
  display: flex;
  align-items: center;
}
.fb-ico {
  flex: none;
  fill: none;
  stroke: #dfe2e5;
  stroke-width: 1;
}
.fb-ico.first {
  margin-left: 6px;
}
.fb-ico.pick {
  margin-left: 9px;
}
.fb-ico.dim {
  stroke: #787d83;
}
.tri {
  flex: none;
  margin: 3px 9px 0 4px;
  border: 2.5px solid transparent;
  border-top: 3px solid #d7dade;
}
.tri.dim {
  border-top-color: #787d83;
}
.fb-select {
  box-sizing: border-box;
  height: 17px;
  border: 1px solid #9ea3a8;
  border-radius: 3px;
  padding: 0 5px 0 3px;
  display: flex;
  align-items: center;
  justify-content: space-between;
  color: #e6e8ea;
  font-size: 8px;
  flex: none;
}
.fb-select .chev {
  margin-top: -3px;
}
.fb-select.base {
  width: 106px;
  margin: 0 7px 0 11px;
}
.fb-select.mid {
  width: 83px;
  margin: 0 7px 0 9px;
}
.fb-select.last {
  width: 83px;
  margin: 0 8px 0 10px;
}
.lock-on {
  width: 22px;
  height: 21px;
  margin: 0 4px 0 5px;
  background: #0d63e6;
  display: flex;
  align-items: center;
  justify-content: center;
  flex: none;
}
.side-bar {
  position: absolute;
  left: 1186px;
  top: 159px;
  width: 22px;
  height: 295px;
  background: #40454b;
  border-radius: 3px;
  display: flex;
  flex-direction: column;
  padding-top: 1px;
  box-sizing: border-box;
}
.side-btn {
  height: 21px;
  display: flex;
  align-items: center;
  justify-content: center;
}
.side-btn svg {
  fill: none;
  stroke: #b9bdc2;
  stroke-width: 1;
}
.side-btn.on {
  background: #0d63e6;
}
.side-btn.on svg {
  stroke: #fff;
}
.cmd-bar {
  position: absolute;
  left: 308px;
  bottom: 8px;
  width: 599px;
  height: 24px;
  background: #232529;
  border-radius: 3px;
  display: flex;
  align-items: center;
  overflow: hidden;
}
.cmd-grip {
  width: 8px;
  height: 24px;
  background: #b9bbbd;
  display: flex;
  align-items: center;
  justify-content: center;
}
.cmd-grip i {
  width: 2px;
  height: 14px;
  background: #2b2d30;
}
.cmd-box {
  margin-left: 4px;
  width: 53px;
  height: 18px;
  box-sizing: border-box;
  border: 1px solid #1a56b0;
  border-radius: 1px;
  color: #c9ccd0;
  font-size: 7.5px;
  line-height: 16px;
  padding-left: 4px;
  display: flex;
  align-items: center;
  gap: 4px;
}
.cmd-dots {
  display: flex;
  flex-direction: column;
  gap: 2px;
}
.cmd-dots i {
  width: 1.5px;
  height: 1.5px;
  background: #4f8fe8;
}
.cmd-tri {
  margin-left: auto;
  margin-right: 6px;
  border: 3.5px solid transparent;
  border-top: 0;
  border-bottom: 4px solid #eceef0;
}

/* status bar */
.status {
  height: 21px;
  box-sizing: border-box;
  flex: none;
  background: #d6d9dd;
  border-bottom: 1px solid #23272b;
  display: flex;
  align-items: center;
  padding-left: 5px;
  color: #2b2e33;
  font-size: 8px;
  white-space: nowrap;
}
.st-help {
  width: 110px;
  font-weight: 500;
}
.st-frame {
  width: 60px;
  font-weight: 500;
}
.st-badge {
  width: 10px;
  height: 10px;
  background: #aab0b6;
  border-radius: 2px;
  color: #d6d9dd;
  font-style: normal;
  font-size: 7px;
  line-height: 10px;
  text-align: center;
  margin-right: 5px;
  flex: none;
}
.st-u {
  width: 135px;
}
.st-g {
  width: 132px;
}
.st-ne {
  width: 723px;
}
.st-select {
  height: 16px;
  box-sizing: border-box;
  background: #e4e6e9;
  border-radius: 2px;
  padding: 0 5px 0 2px;
  display: flex;
  align-items: center;
  justify-content: space-between;
  font-size: 8.3px;
  flex: none;
}
.st-select .chev {
  margin-top: -2px;
}
.unit-f {
  width: 42px;
  margin-right: 4px;
}
.unit-l {
  width: 40px;
  margin-right: 7px;
}
.st-ico {
  flex: none;
  margin-right: 6px;
}
.st-slider {
  width: 86px;
  height: 16px;
  background: #e4e6e9;
  border-radius: 2px;
  position: relative;
  margin-right: 5px;
  flex: none;
}
.st-slider .track {
  position: absolute;
  left: 3px;
  right: 3px;
  top: 7px;
  height: 2px;
  background: #d2d5d9;
}
.st-slider .thumb {
  position: absolute;
  left: 12px;
  top: 2px;
  width: 4px;
  height: 12px;
  background: #5c6168;
  border-radius: 1px;
}
.zoom {
  width: 43px;
}
</style>
